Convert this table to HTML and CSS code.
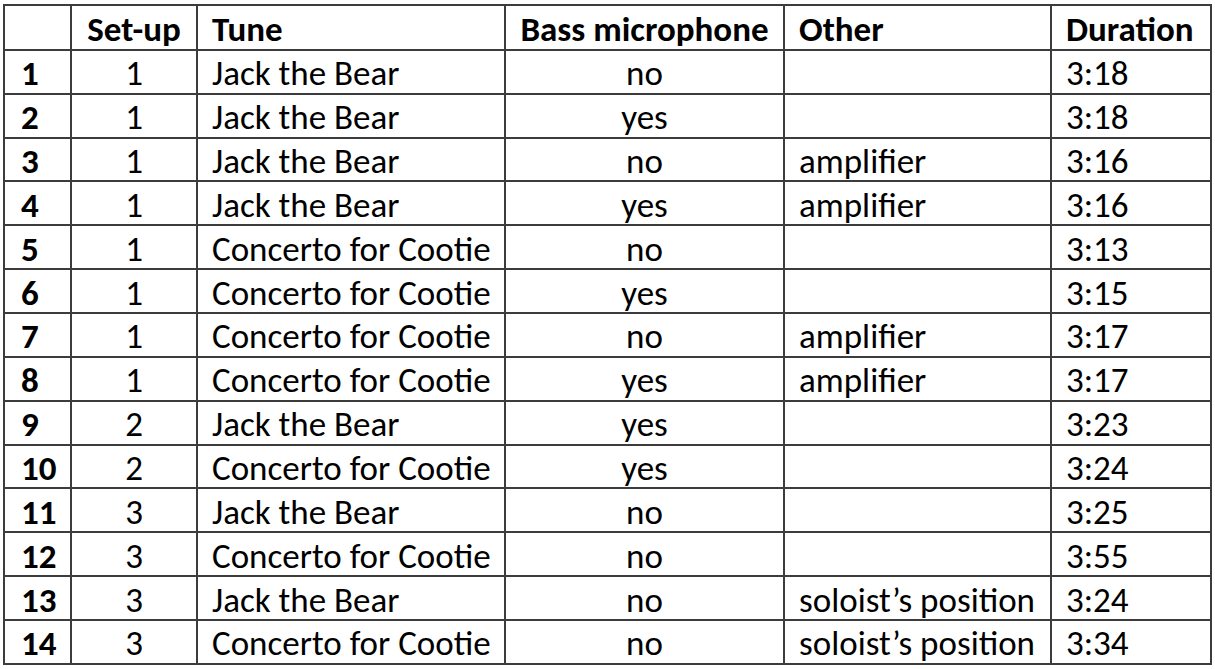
FILE: index.html
```html
<!DOCTYPE html>
<html>
<head>
<meta charset="utf-8">
<link rel="stylesheet" href="styles.css">
</head>
<body>
<div class="page">
<table class="sessions">
  <colgroup>
    <col class="c-num"><col class="c-setup"><col class="c-tune"><col class="c-bass"><col class="c-other"><col class="c-dur">
  </colgroup>
  <thead>
    <tr><th></th><th class="center">Set-up</th><th>Tune</th><th class="center">Bass microphone</th><th>Other</th><th>Duration</th></tr>
  </thead>
  <tbody>
    <tr><th>1</th><td class="center">1</td><td>Jack the Bear</td><td class="center">no</td><td></td><td>3:18</td></tr>
    <tr><th>2</th><td class="center">1</td><td>Jack the Bear</td><td class="center">yes</td><td></td><td>3:18</td></tr>
    <tr><th>3</th><td class="center">1</td><td>Jack the Bear</td><td class="center">no</td><td>amplifier</td><td>3:16</td></tr>
    <tr><th>4</th><td class="center">1</td><td>Jack the Bear</td><td class="center">yes</td><td>amplifier</td><td>3:16</td></tr>
    <tr><th>5</th><td class="center">1</td><td>Concerto for Cootie</td><td class="center">no</td><td></td><td>3:13</td></tr>
    <tr><th>6</th><td class="center">1</td><td>Concerto for Cootie</td><td class="center">yes</td><td></td><td>3:15</td></tr>
    <tr><th>7</th><td class="center">1</td><td>Concerto for Cootie</td><td class="center">no</td><td>amplifier</td><td>3:17</td></tr>
    <tr><th>8</th><td class="center">1</td><td>Concerto for Cootie</td><td class="center">yes</td><td>amplifier</td><td>3:17</td></tr>
    <tr><th>9</th><td class="center">2</td><td>Jack the Bear</td><td class="center">yes</td><td></td><td>3:23</td></tr>
    <tr><th>10</th><td class="center">2</td><td>Concerto for Cootie</td><td class="center">yes</td><td></td><td>3:24</td></tr>
    <tr><th>11</th><td class="center">3</td><td>Jack the Bear</td><td class="center">no</td><td></td><td>3:25</td></tr>
    <tr><th>12</th><td class="center">3</td><td>Concerto for Cootie</td><td class="center">no</td><td></td><td>3:55</td></tr>
    <tr><th>13</th><td class="center">3</td><td>Jack the Bear</td><td class="center">no</td><td>soloist’s position</td><td>3:24</td></tr>
    <tr><th>14</th><td class="center">3</td><td>Concerto for Cootie</td><td class="center">no</td><td>soloist’s position</td><td>3:34</td></tr>
  </tbody>
</table>
</div>
</body>
</html>
```

FILE: styles.css
```css
html, body {
  margin: 0;
  padding: 0;
  background: #ffffff;
}

.page {
  padding: 4px 0 0 3px;
}

.sessions {
  border-collapse: collapse;
  table-layout: fixed;
  width: 1207px;
  font-family: Carlito, Lato, "Open Sans", sans-serif;
  font-size: 35px;
  color: #000;
}

.c-num { width: 67px; }
.c-setup { width: 126px; }
.c-tune { width: 308px; }
.c-bass { width: 279px; }
.c-other { width: 267px; }
.c-dur { width: 160px; }

.sessions th,
.sessions td {
  border: 2px solid #3c3c3c;
  height: 39.87px;
  padding: 3px 0 0 14px;
  box-sizing: content-box;
  text-align: left;
  vertical-align: middle;
  white-space: nowrap;
  line-height: 36px;
}

.sessions tbody td,
.sessions tbody th {
  height: 38.87px;
}

.sessions th {
  font-weight: 700;
}

.sessions tbody th {
  padding-left: 16px;
}

.sessions .center {
  text-align: center;
  padding-left: 0;
}
```
